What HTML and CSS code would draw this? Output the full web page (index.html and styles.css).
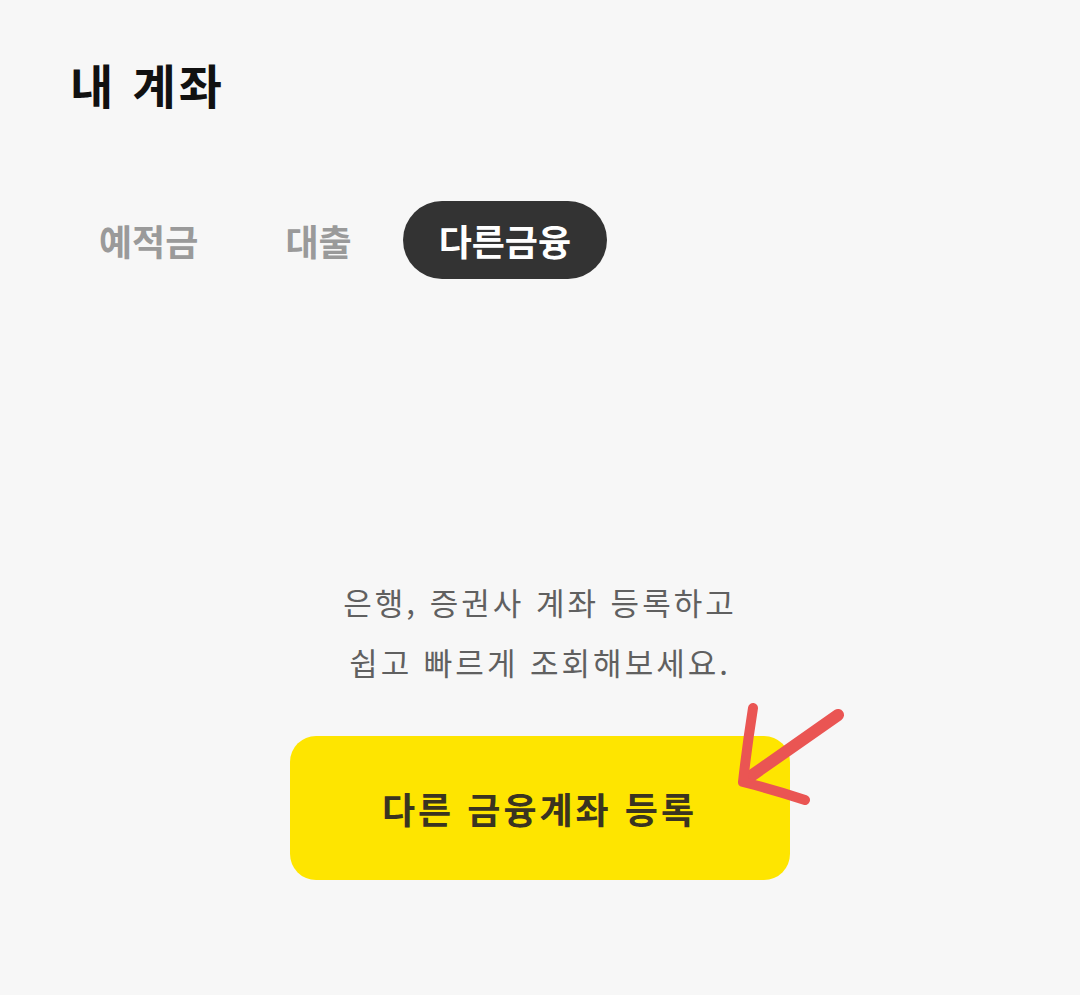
FILE: index.html
```html
<!DOCTYPE html>
<html lang="ko">
<head>
  <meta charset="UTF-8">
  <meta name="viewport" content="width=device-width, initial-scale=1.0">
  <title>내 계좌</title>
  <link rel="stylesheet" href="styles.css">
</head>
<body>
  <div class="page">
    <h1 class="title">내 계좌</h1>

    <div class="tabs">
      <button class="tab">예적금</button>
      <button class="tab">대출</button>
      <button class="tab active">다른금융</button>
    </div>

    <div class="empty">
      <p class="empty-text">은행, 증권사 계좌 등록하고<br>쉽고 빠르게 조회해보세요.</p>
      <div class="register-wrap">
        <button class="register">다른 금융계좌 등록</button>
        <!-- hand drawn arrow pointing at the button -->
        <svg class="arrow" width="120" height="116" viewBox="0 0 120 116">
          <path class="shaft" d="M103 15 L16 76" />
          <path d="M18 8 Q12 46 8 82 Q40 90 70 100" />
        </svg>
      </div>
    </div>
  </div>
</body>
</html>
```

FILE: styles.css
```css
body {
  margin: 0;
  background-color: #f7f7f7;
  font-family: "Noto Sans CJK KR", "Noto Sans", sans-serif;
}
.page {
  width: 1080px;
  height: 995px;
  padding-top: 54px;
  box-sizing: border-box;
}
.title {
  margin: 0 0 0 70px;
  font-size: 47px;
  line-height: 60px;
  font-weight: 700;
  color: #111;
  letter-spacing: 3px;
}
.tabs {
  display: flex;
  gap: 15px;
  margin: 87px 0 0 63px;
}
.tab {
  height: 78px;
  padding: 0 36px;
  border: none;
  border-radius: 39px;
  background: none;
  font-family: inherit;
  font-size: 36px;
  font-weight: 700;
  color: #9a9a9a;
}
.tab.active {
  background-color: #333;
  color: #fff;
}
.empty {
  display: flex;
  flex-direction: column;
  align-items: center;
  margin-top: 293px;
}
.empty-text {
  margin: 0;
  font-size: 31px;
  line-height: 60px;
  letter-spacing: 3px;
  color: #606060;
  text-align: center;
}
.register-wrap {
  position: relative;
  margin-top: 44px;
}
.register {
  width: 500px;
  height: 144px;
  padding-left: 5px;
  border: none;
  border-radius: 26px;
  background-color: #fee500;
  font-family: inherit;
  font-size: 36px;
  font-weight: 700;
  letter-spacing: 3px;
  color: #3a3420;
}
.arrow {
  position: absolute;
  left: 445px;
  top: -36px;
  fill: none;
  stroke: #ea5553;
  stroke-width: 10;
  stroke-linecap: round;
  stroke-linejoin: round;
}
.arrow .shaft {
  stroke-width: 12;
}
```
